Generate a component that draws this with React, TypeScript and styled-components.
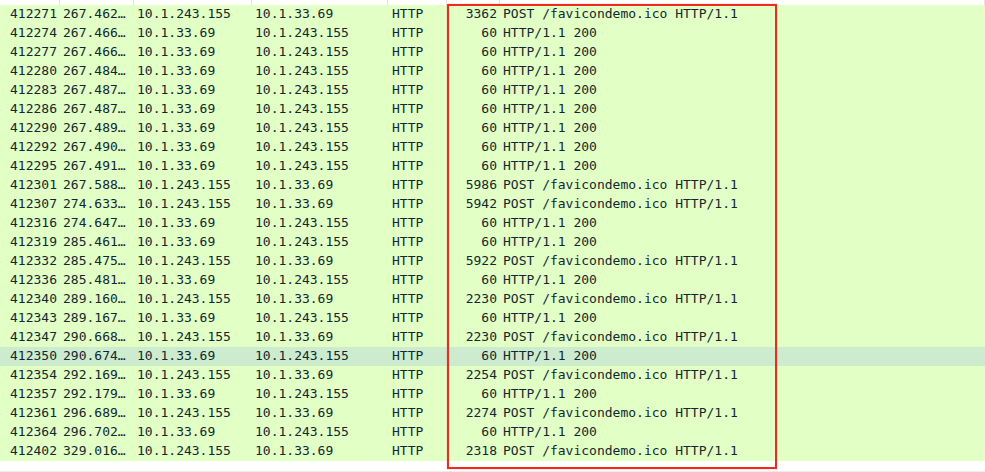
import React from "react";
import styled, { createGlobalStyle } from "styled-components";

const Global = createGlobalStyle`
  html, body { margin: 0; padding: 0; background: #ffffff; }
  body { width: 985px; height: 472px; overflow: hidden; }
`;

const COLS = "60px 74px 118px 136px 59px 53px 1fr";

const Page = styled.div`
  position: relative;
  width: 985px;
  height: 472px;
  background: #ffffff;
  font-family: "DejaVu Sans Mono", "Liberation Mono", monospace;
  font-size: 13px;
  color: #12272e;
`;

const Header = styled.div`
  display: grid;
  grid-template-columns: ${COLS};
  height: 5px;
  background: #ffffff;
`;

const HeadCell = styled.div`
  border-right: 1px solid #e3e3e3;
`;

const List = styled.div`
  display: flex;
  flex-direction: column;
`;

const Row = styled.div<{ $hi?: boolean }>`
  display: grid;
  grid-template-columns: ${COLS};
  height: 19px;
  line-height: 18px;
  background: ${(p) => (p.$hi ? "#cdeccf" : "#e2ffc6")};
  white-space: pre;
`;

const Cell = styled.div<{ $right?: boolean; $pl?: number }>`
  overflow: hidden;
  text-align: ${(p) => (p.$right ? "right" : "left")};
  padding-left: ${(p) => p.$pl ?? 3}px;
  padding-right: 3px;
`;

const Footer = styled.div`
  height: 10px;
  border-bottom: 1px solid #ececec;
`;

const RedBox = styled.div`
  position: absolute;
  left: 447px;
  top: 4px;
  width: 326px;
  height: 461px;
  border: 2px solid #f5281c;
  box-shadow: 0 0 1px rgba(245, 40, 28, 0.5);
  pointer-events: none;
`;

type Pkt = [string, string, string, string, string, string];

const A = "10.1.243.155";
const B = "10.1.33.69";
const POST = "POST /favicondemo.ico HTTP/1.1";
const OK = "HTTP/1.1 200";

const rows: Pkt[] = [
  ["412271", "267.462…", A, B, "3362", POST],
  ["412274", "267.466…", B, A, "60", OK],
  ["412277", "267.466…", B, A, "60", OK],
  ["412280", "267.484…", B, A, "60", OK],
  ["412283", "267.487…", B, A, "60", OK],
  ["412286", "267.487…", B, A, "60", OK],
  ["412290", "267.489…", B, A, "60", OK],
  ["412292", "267.490…", B, A, "60", OK],
  ["412295", "267.491…", B, A, "60", OK],
  ["412301", "267.588…", A, B, "5986", POST],
  ["412307", "274.633…", A, B, "5942", POST],
  ["412316", "274.647…", B, A, "60", OK],
  ["412319", "285.461…", B, A, "60", OK],
  ["412332", "285.475…", A, B, "5922", POST],
  ["412336", "285.481…", B, A, "60", OK],
  ["412340", "289.160…", A, B, "2230", POST],
  ["412343", "289.167…", B, A, "60", OK],
  ["412347", "290.668…", A, B, "2230", POST],
  ["412350", "290.674…", B, A, "60", OK],
  ["412354", "292.169…", A, B, "2254", POST],
  ["412357", "292.179…", B, A, "60", OK],
  ["412361", "296.689…", A, B, "2274", POST],
  ["412364", "296.702…", B, A, "60", OK],
  ["412402", "329.016…", A, B, "2318", POST],
];

export default function App() {
  return (
    <>
      <Global />
      <Page>
        <Header>
          {Array.from({ length: 7 }).map((_, i) => (
            <HeadCell key={i} />
          ))}
        </Header>
        <List>
          {rows.map((r) => (
            <Row key={r[0]} $hi={r[0] === "412350"}>
              <Cell $right>{r[0]}</Cell>
              <Cell>{r[1]}</Cell>
              <Cell>{r[2]}</Cell>
              <Cell>{r[3]}</Cell>
              <Cell $pl={4}>HTTP</Cell>
              <Cell $right>{r[4]}</Cell>
              <Cell>{r[5]}</Cell>
            </Row>
          ))}
        </List>
        <Footer />
        <RedBox />
      </Page>
    </>
  );
}
